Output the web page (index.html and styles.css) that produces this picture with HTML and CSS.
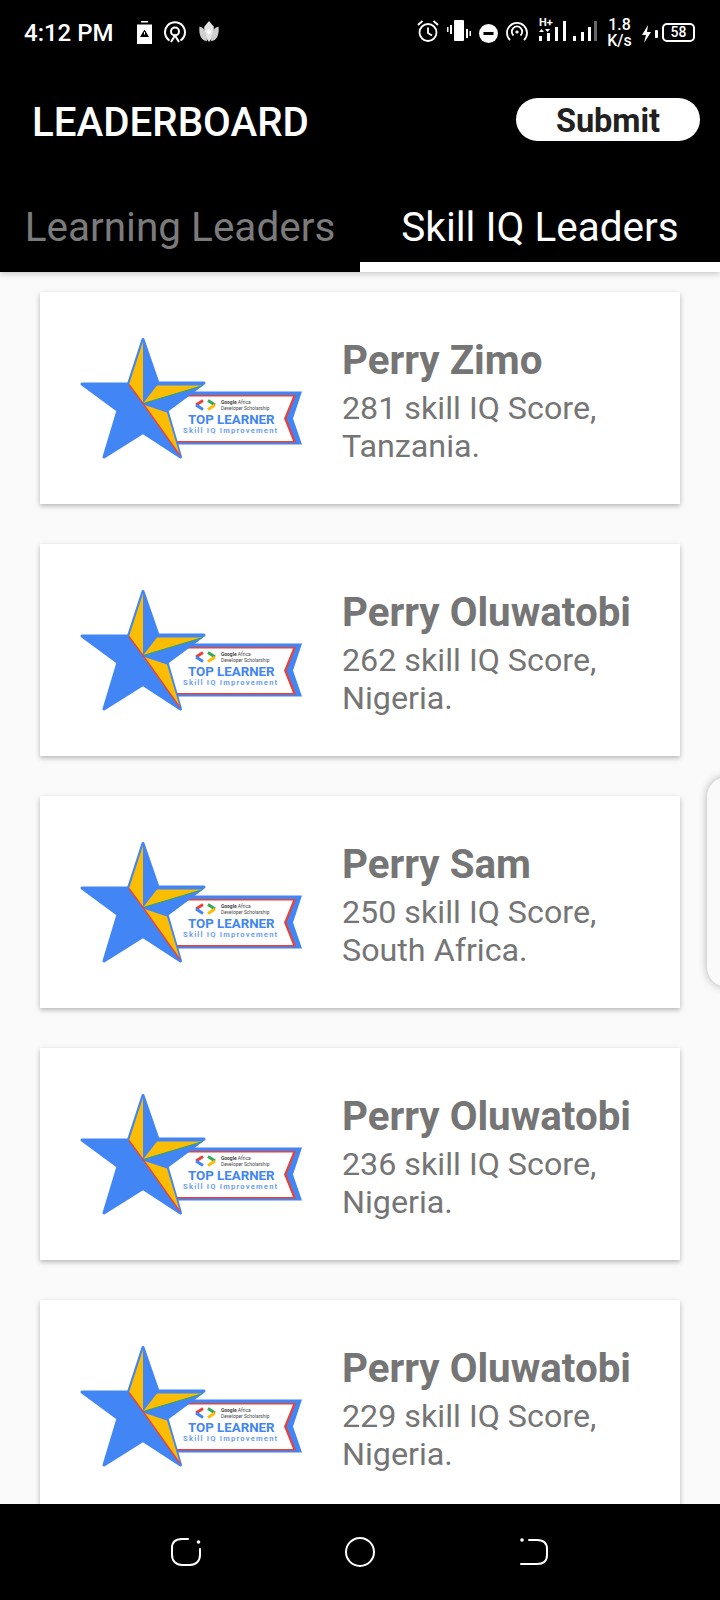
FILE: index.html
```html
<!DOCTYPE html>
<html lang="en">
<head>
  <meta charset="UTF-8" />
  <meta name="viewport" content="width=device-width, initial-scale=1.0"/>
  <title>Leaderboard</title>
  <link rel="stylesheet" href="styles.css">
</head>
<body>
  <div class="phone">
    <div class="status">
      <div class="status-left">
        <span class="clock">4:12 PM</span>
        <svg class="ic-batt" viewBox="0 0 15 23">
          <rect x="4" y="0" width="7" height="1.500" fill="#fff"/>
          <path d="M0 3.500H15V23H0Z" fill="#fff"/>
          <path d="M7.500 8.500L12 16H3Z" fill="#000"/>
          <rect x="7" y="11" width="1" height="2.500" fill="#fff"/>
        </svg>
        <svg class="ic-22" viewBox="0 0 22 22" fill="none" stroke="#fff" stroke-width="2">
          <path d="M5.500 19.500A10 10 0 1 1 16.500 19.500"/>
          <circle cx="11" cy="10.500" r="4"/>
          <path d="M7 21L11 14.500L15 21"/>
        </svg>
        <svg class="ic-22" viewBox="0 0 22 23">
          <path d="M11 0L16 6L16 15L11 22L6 15L6 6Z" fill="#e4e4e4"/>
          <path d="M1 6C5 6 8 10 9 21C4 21 0 16 1 6Z" fill="#cfcfcf"/>
          <path d="M21 6C17 6 14 10 13 21C18 21 22 16 21 6Z" fill="#cfcfcf"/>
          <path d="M11 8L14 11L11 14L8 11Z" fill="#fff"/>
        </svg>
      </div>
      <div class="status-right">
        <svg class="ic-22" viewBox="0 0 22 22" fill="none" stroke="#fff" stroke-width="1.800">
          <circle cx="11" cy="12.500" r="8.500"/>
          <path d="M11 7.500V13L15 15.500"/>
          <path d="M1 5L5.500 1M21 5L16.500 1"/>
        </svg>
        <svg class="ic-vib" viewBox="0 0 24 22" fill="#fff">
          <rect x="7" y="0" width="10" height="21" rx="1"/>
          <rect x="3" y="5" width="2" height="9"/>
          <rect x="0" y="7" width="1.500" height="5"/>
          <rect x="19" y="9" width="2" height="9"/>
          <rect x="22.500" y="11" width="1.500" height="5"/>
        </svg>
        <svg class="ic-dnd" viewBox="0 0 19 19">
          <circle cx="9.500" cy="9.500" r="9.500" fill="#fff"/>
          <rect x="4.500" y="8" width="10" height="3" fill="#000"/>
        </svg>
        <svg class="ic-22" viewBox="0 0 22 22" fill="none" stroke="#fff" stroke-width="1.800">
          <path d="M4 20A10 10 0 1 1 18 20"/>
          <path d="M7.500 15.500A5.200 5.200 0 1 1 14.500 15.500"/>
          <circle cx="11" cy="12" r="1.600" fill="#fff" stroke="none"/>
        </svg>
        <div class="net">
          <span class="net-type">H+</span>
          <svg class="ic-sig" viewBox="0 0 58 22" fill="#fff">
            <path d="M0 12L2.500 9L5 12ZM6 9L8.500 12L11 9Z"/>
            <rect x="0" y="16" width="3" height="5"/>
            <rect x="8" y="13" width="3" height="8"/>
            <rect x="16" y="7" width="3" height="14"/>
            <rect x="24" y="1" width="3" height="20"/>
            <rect x="34" y="16" width="3" height="5"/>
            <rect x="42" y="12" width="3" height="9"/>
            <rect x="49" y="7" width="3" height="14"/>
            <rect x="55" y="1" width="3" height="20" fill="#666"/>
          </svg>
        </div>
        <div class="speed"><span>1.8</span><span>K/s</span></div>
        <svg class="ic-bolt" viewBox="0 0 17 18" fill="#fff">
          <path d="M6 0L0 10H4L2 18L9 7H5Z"/>
          <rect x="13" y="5" width="3" height="8" rx="1"/>
        </svg>
        <div class="battery">58</div>
      </div>
    </div>

    <header class="toolbar">
      <h1>LEADERBOARD</h1>
      <button class="submit">Submit</button>
    </header>

    <nav class="tabs">
      <a class="tab">Learning Leaders</a>
      <a class="tab active">Skill IQ Leaders</a>
    </nav>

    <main class="list" id="leaders">
      <div class="edge-handle"></div>
      <!-- cards load here -->
    </main>

    <div class="navbar">
      <svg class="nav-ic" viewBox="0 0 30 30" fill="none" stroke="#fff" stroke-width="2" stroke-linecap="round">
        <path d="M17 2H11C5 2 1 5 1 11V18C1 24 5 28 11 28H19C25 28 29 24 29 18V12"/>
        <circle cx="27.500" cy="5" r="1.800" fill="#fff" stroke="none"/>
      </svg>
      <svg class="nav-ic" viewBox="0 0 30 30" fill="none" stroke="#fff" stroke-width="2">
        <circle cx="15" cy="15" r="14"/>
      </svg>
      <svg class="nav-ic" viewBox="0 0 30 30" fill="none" stroke="#fff" stroke-width="2" stroke-linecap="round">
        <path d="M10 3H18C24 3 28 6 28 12V18C28 24 24 27 18 27H2"/>
        <circle cx="3" cy="3" r="1.800" fill="#fff" stroke="none"/>
      </svg>
    </div>
  </div>

  <script>
    const leaders = [
      { name: 'Perry Zimo', score: 281, country: 'Tanzania' },
      { name: 'Perry Oluwatobi', score: 262, country: 'Nigeria' },
      { name: 'Perry Sam', score: 250, country: 'South Africa' },
      { name: 'Perry Oluwatobi', score: 236, country: 'Nigeria' },
      { name: 'Perry Oluwatobi', score: 229, country: 'Nigeria' }
    ];

    const badge = `
      <svg class="badge" viewBox="0 2.500 260 150">
        <path d="M100 71H242L233 98L242 124H100Z" fill="#4285f4"/>
        <path d="M100 74.500H236L226.500 98L236 122H100Z" fill="#ea4335"/>
        <path d="M100 76H233L224 98L233 120.500H100Z" fill="#fff"/>
        <path d="M83 19L98 62.500H144L107 90L120.500 136.500L83 112L44 136.500L58 90L22 63.500H68.500Z" fill="#4285f4" stroke="#4285f4" stroke-width="3" stroke-linejoin="round"/>
        <path d="M83 21L69 64L83 83Z" fill="#fbbc04"/>
        <path d="M97 65H143L83 83Z" fill="#fbbc04"/>
        <path d="M83 84L107 92L120 135Z" fill="#fbbc04"/>
        <path d="M143 65L83 83" stroke="#34a853" stroke-width="1" fill="none"/>
        <path d="M69 64L83 83L120 135" stroke="#ea4335" stroke-width="1.300" fill="none"/>
        <path d="M143 80L136 84.500" stroke="#ea4335" stroke-width="3" fill="none"/>
        <path d="M136 84.500L143 89" stroke="#4285f4" stroke-width="3" fill="none"/>
        <path d="M148 80L155 84.500" stroke="#34a853" stroke-width="3" fill="none"/>
        <path d="M155 84.500L148 89" stroke="#fbbc04" stroke-width="3" fill="none"/>
        <text class="b-small" x="161" y="83"><tspan font-weight="700">Google</tspan> Africa</text>
        <text class="b-small" x="161" y="89">Developer Scholarship</text>
        <text class="b-top" x="128" y="103.500">TOP LEARNER</text>
        <text class="b-skill" x="123" y="112.500">Skill IQ Improvement</text>
      </svg>`;

    const list = document.getElementById('leaders');
    leaders.forEach(person => {
      const card = document.createElement('div');
      card.className = 'card';
      card.innerHTML = `
        ${badge}
        <div class="info">
          <h3>${person.name}</h3>
          <p>${person.score} skill IQ Score, ${person.country}.</p>
        </div>
      `;
      list.appendChild(card);
    });
  </script>
</body>
</html>
```

FILE: styles.css
```css
* {
  box-sizing: border-box;
}
body {
  margin: 0;
  font-family: 'Roboto', 'Liberation Sans', sans-serif;
  background: #fafafa;
}
.phone {
  width: 720px;
  height: 1600px;
  display: flex;
  flex-direction: column;
  overflow: hidden;
}

/* status bar */
.status {
  height: 64px;
  flex: none;
  background: #000;
  display: flex;
  justify-content: space-between;
  padding: 21px 24px 0;
  color: #fff;
}
.status-left,
.status-right {
  display: flex;
  align-items: flex-start;
}
.status-left {
  gap: 12px;
}
.status-right {
  gap: 8px;
  margin-top: -1px;
}
.clock {
  font-size: 24px;
  font-weight: 500;
  line-height: 24px;
  width: 89px;
  margin-right: 12px;
  white-space: nowrap;
}
.ic-batt {
  width: 15px;
  height: 23px;
}
.ic-22 {
  width: 22px;
  height: 22px;
}
.ic-vib {
  width: 24px;
  height: 22px;
}
.ic-dnd {
  width: 19px;
  height: 19px;
  margin-top: 4px;
}
.net {
  position: relative;
  width: 58px;
  height: 26px;
  margin: 0 0 0 3px;
}
.net-type {
  position: absolute;
  left: 0;
  top: -3px;
  font-size: 11px;
  font-weight: 700;
  line-height: 12px;
}
.ic-sig {
  width: 58px;
  height: 22px;
  display: block;
}
.speed {
  display: flex;
  flex-direction: column;
  align-items: center;
  font-size: 16px;
  font-weight: 500;
  line-height: 16px;
  margin: -3px 0 0 2px;
  width: 25px;
}
.ic-bolt {
  width: 17px;
  height: 18px;
  margin: 5px 0 0 2px;
}
.battery {
  width: 33px;
  height: 19px;
  border: 2px solid #fff;
  border-radius: 5px;
  font-size: 14px;
  font-weight: 500;
  line-height: 15px;
  text-align: center;
  margin: 3px 1px 0 -5px;
}

/* toolbar */
.toolbar {
  height: 112px;
  flex: none;
  background: #000;
  display: flex;
  align-items: flex-start;
  justify-content: space-between;
  padding: 34px 20px 0 32px;
}
.toolbar h1 {
  margin: 3px 0 0;
  color: #fff;
  font-size: 40.300px;
  font-weight: 500;
  line-height: 44px;
}
.submit {
  width: 184px;
  height: 43px;
  border: 0;
  padding: 2px 0 0;
  background: #fff;
  border-radius: 22px;
  color: #212121;
  font-family: inherit;
  font-size: 32.500px;
  font-weight: 700;
}

/* tabs */
.tabs {
  height: 96px;
  flex: none;
  background: #000;
  display: flex;
  box-shadow: 0 2px 6px rgba(0,0,0,0.2);
  position: relative;
  z-index: 1;
}
.tab {
  flex: 1;
  text-align: center;
  color: #7b7b7b;
  font-size: 40.500px;
  line-height: 44px;
  padding-top: 29px;
}
.tab.active {
  color: #fff;
  border-bottom: 10px solid #fff;
}

/* cards */
.list {
  flex: 1;
  min-height: 0;
  overflow: hidden;
  position: relative;
  display: flex;
  flex-direction: column;
  gap: 40px;
  padding: 20px 40px 0;
  background: #fafafa;
}
.card {
  flex: none;
  height: 212px;
  background: #fff;
  display: flex;
  align-items: center;
  gap: 22px;
  padding-left: 20px;
  box-shadow: 0 2px 5px rgba(0,0,0,0.28);
}
.badge {
  width: 260px;
  height: 150px;
  flex: none;
}
.b-small {
  font-size: 4.900px;
  fill: #444;
}
.b-top {
  font-size: 13.300px;
  font-weight: 700;
  fill: #4285f4;
}
.b-skill {
  font-size: 7.600px;
  font-weight: 700;
  letter-spacing: 1.200px;
  fill: #6d9ff5;
}
.info {
  flex: 1;
  color: #757575;
  padding-top: 7px;
}
.info h3 {
  margin: 0 0 5px;
  font-size: 40.300px;
  font-weight: 700;
  line-height: 46px;
}
.info p {
  margin: 0;
  font-size: 32.250px;
  line-height: 38px;
  width: 290px;
}
.edge-handle {
  position: absolute;
  left: 707px;
  top: 505px;
  width: 40px;
  height: 210px;
  background: #fafafa;
  border-radius: 20px;
  box-shadow: 0 0 8px rgba(0,0,0,0.3);
}

/* android nav */
.navbar {
  height: 96px;
  flex: none;
  background: #000;
  display: flex;
  justify-content: center;
  align-items: flex-start;
  gap: 144px;
  padding-top: 33px;
  position: relative;
  z-index: 1;
}
.nav-ic {
  width: 30px;
  height: 30px;
}
```
